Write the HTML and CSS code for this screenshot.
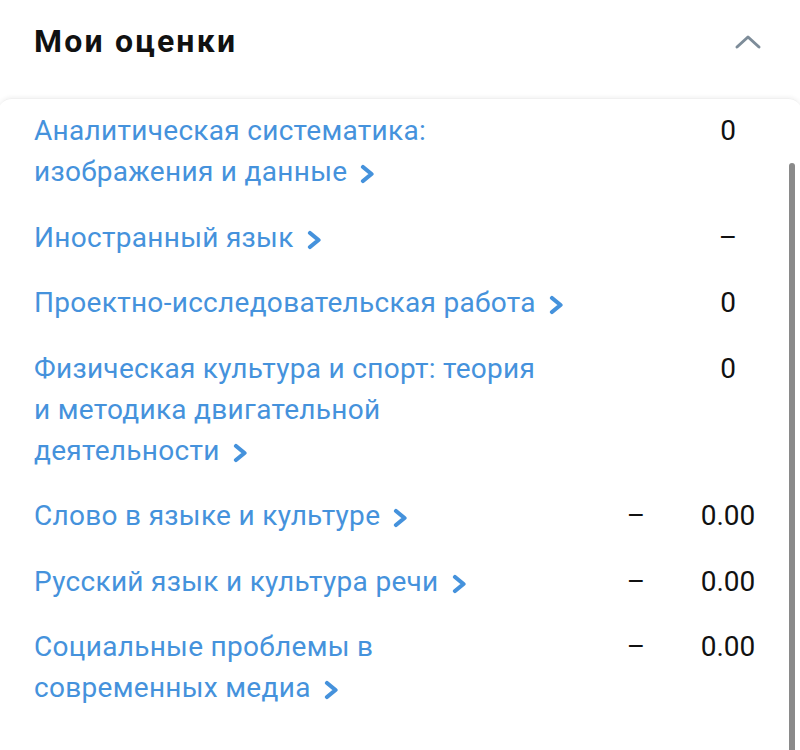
FILE: index.html
```html
<!DOCTYPE html>
<html lang="ru">
<head>
    <meta charset="UTF-8">
    <meta name="viewport" content="width=device-width, initial-scale=1.0">
    <title>Мои оценки</title>
    <link rel="stylesheet" href="styles.css">
</head>
<body>

<div class="grades">
    <div class="grades-header">
        <h1>Мои оценки</h1>
        <svg class="collapse" width="28" height="16" viewBox="0 0 28 16">
            <path d="M3 13 L14 3 L25 13" fill="none" stroke="#7d8c99" stroke-width="3" stroke-linecap="round" stroke-linejoin="round"/>
        </svg>
    </div>

    <div class="card">
        <div class="scrollbar"></div>

        <div class="row">
            <a class="subject">Аналитическая систематика: изображения и <span class="last">данные<svg class="arrow" width="14" height="20" viewBox="0 0 14 20"><path d="M3 3 L11.5 10 L3 17" fill="none" stroke="#4592dc" stroke-width="4.2" stroke-linecap="round" stroke-linejoin="round"/></svg></span></a>
            <span class="score">0</span>
        </div>
        <div class="row">
            <a class="subject">Иностранный <span class="last">язык<svg class="arrow" width="14" height="20" viewBox="0 0 14 20"><path d="M3 3 L11.5 10 L3 17" fill="none" stroke="#4592dc" stroke-width="4.2" stroke-linecap="round" stroke-linejoin="round"/></svg></span></a>
            <span class="score">–</span>
        </div>
        <div class="row">
            <a class="subject">Проектно-исследовательская <span class="last">работа<svg class="arrow" width="14" height="20" viewBox="0 0 14 20"><path d="M3 3 L11.5 10 L3 17" fill="none" stroke="#4592dc" stroke-width="4.2" stroke-linecap="round" stroke-linejoin="round"/></svg></span></a>
            <span class="score">0</span>
        </div>
        <div class="row">
            <a class="subject">Физическая культура и спорт: теория и&nbsp;методика двигательной <span class="last">деятельности<svg class="arrow" width="14" height="20" viewBox="0 0 14 20"><path d="M3 3 L11.5 10 L3 17" fill="none" stroke="#4592dc" stroke-width="4.2" stroke-linecap="round" stroke-linejoin="round"/></svg></span></a>
            <span class="score">0</span>
        </div>
        <div class="row with-grade">
            <a class="subject">Слово в языке и <span class="last">культуре<svg class="arrow" width="14" height="20" viewBox="0 0 14 20"><path d="M3 3 L11.5 10 L3 17" fill="none" stroke="#4592dc" stroke-width="4.2" stroke-linecap="round" stroke-linejoin="round"/></svg></span></a>
            <span class="grade">–</span>
            <span class="score">0.00</span>
        </div>
        <div class="row with-grade">
            <a class="subject">Русский язык и культура <span class="last">речи<svg class="arrow" width="14" height="20" viewBox="0 0 14 20"><path d="M3 3 L11.5 10 L3 17" fill="none" stroke="#4592dc" stroke-width="4.2" stroke-linecap="round" stroke-linejoin="round"/></svg></span></a>
            <span class="grade">–</span>
            <span class="score">0.00</span>
        </div>
        <div class="row with-grade">
            <a class="subject">Социальные проблемы в современных <span class="last">медиа<svg class="arrow" width="14" height="20" viewBox="0 0 14 20"><path d="M3 3 L11.5 10 L3 17" fill="none" stroke="#4592dc" stroke-width="4.2" stroke-linecap="round" stroke-linejoin="round"/></svg></span></a>
            <span class="grade">–</span>
            <span class="score">0.00</span>
        </div>
    </div>
</div>

</body>
</html>
```

FILE: styles.css
```css
body {
    margin: 0;
    background: #ffffff;
    font-family: Roboto, "Noto Sans", sans-serif;
    color: #111111;
}
.grades {
    display: flex;
    flex-direction: column;
    height: 750px;
    overflow: hidden;
}
.grades-header {
    display: flex;
    align-items: center;
    justify-content: space-between;
    padding: 21px 38px 0 34px;
}
.grades-header h1 {
    margin: 0;
    font-size: 32px;
    line-height: 40px;
    font-weight: 700;
    letter-spacing: 2.2px;
}
.collapse {
    margin-top: 2px;
}
.card {
    position: relative;
    flex: 1;
    margin: 37px -2px 0 -2px;
    padding: 11px 46px 0 36px;
    border-radius: 14px 14px 0 0;
    box-shadow: 0 -1px 4px rgba(0, 0, 0, 0.06);
    border-top: 1px solid #f0f0f0;
}
.scrollbar {
    position: absolute;
    right: 7px;
    top: 64px;
    bottom: 0;
    width: 6px;
    border-radius: 3px 3px 0 0;
    background: #8a8a8a;
}
.row {
    display: flex;
    align-items: flex-start;
    font-size: 28px;
    line-height: 41px;
    margin-bottom: 24.5px;
}
.subject {
    flex: 1;
    color: #4592dc;
    letter-spacing: 0.3px;
    padding-right: 125px;
}
.with-grade .subject {
    padding-right: 106px;
}
.last {
    white-space: nowrap;
}
.arrow {
    margin-left: 13px;
    vertical-align: -3px;
}
.grade {
    width: 60px;
    text-align: center;
}
.score {
    width: 56px;
    text-align: center;
}
.with-grade .score {
    margin-left: 34px;
}
```
